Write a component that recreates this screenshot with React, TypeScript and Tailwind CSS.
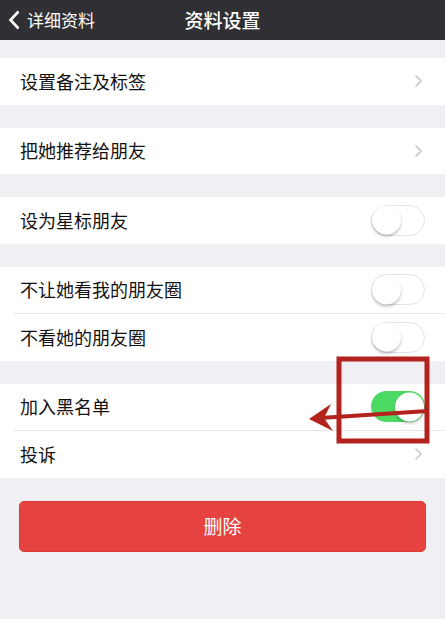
import React from "react";

const font = { fontFamily: '"Noto Sans CJK SC", "Noto Sans", sans-serif' };

function Chevron() {
  return (
    <svg width="9" height="14" viewBox="0 0 9 14" className="shrink-0">
      <path d="M1.5 1.5 L7 7 L1.5 12.5" fill="none" stroke="#c7c7cc" strokeWidth="1.6" />
    </svg>
  );
}

function Toggle({ on }: { on?: boolean }) {
  return (
    <div
      className={`relative h-[31px] w-[54px] shrink-0 rounded-full ${
        on ? "bg-[#4cd964]" : "border-[1.5px] border-[#e3e3e6] bg-white"
      }`}
    >
      <div
        className={`absolute top-1/2 h-[29px] w-[29px] -translate-y-1/2 rounded-full bg-white shadow-[0_2px_3px_rgba(0,0,0,0.25)] ${
          on ? "right-[1px]" : "left-0"
        }`}
      />
    </div>
  );
}

type Item = { label: string; kind: "arrow" | "off" | "on" };

function Group({ items }: { items: Item[] }) {
  return (
    <div className="bg-white">
      {items.map((item, i) => (
        <div key={item.label} className="relative">
          {i > 0 && <div className="ml-[14px] h-px bg-[#e5e5e8]" />}
          <div className="flex h-[46.5px] items-center justify-between pl-5 pr-[20px]">
            <span className="text-[18px] text-[#111]">{item.label}</span>
            {item.kind === "arrow" && (
              <div className="pr-[2px]">
                <Chevron />
              </div>
            )}
            {item.kind === "off" && <Toggle />}
            {item.kind === "on" && <Toggle on />}
          </div>
        </div>
      ))}
    </div>
  );
}

export default function App() {
  return (
    <div className="relative h-[619px] w-[445px] overflow-hidden bg-[#efeff4]" style={font}>
      {/* Nav bar */}
      <div className="relative flex h-10 items-center bg-[#303034] text-white">
        <div className="flex items-center pl-[8px]">
          <svg width="13" height="20" viewBox="0 0 13 20">
            <path d="M10.5 1.5 L2.5 10 L10.5 18.5" fill="none" stroke="white" strokeWidth="2.6" />
          </svg>
          <span className="ml-[6px] text-[17px]">详细资料</span>
        </div>
        <span className="absolute left-1/2 -translate-x-1/2 text-[19px] font-medium">资料设置</span>
      </div>

      <div className="flex flex-col gap-[23px] pt-[18px]">
        <Group items={[{ label: "设置备注及标签", kind: "arrow" }]} />
        <Group items={[{ label: "把她推荐给朋友", kind: "arrow" }]} />
        <Group items={[{ label: "设为星标朋友", kind: "off" }]} />
        <Group
          items={[
            { label: "不让她看我的朋友圈", kind: "off" },
            { label: "不看她的朋友圈", kind: "off" },
          ]}
        />
        <Group
          items={[
            { label: "加入黑名单", kind: "on" },
            { label: "投诉", kind: "arrow" },
          ]}
        />
        <div className="px-[19px]">
          <button className="flex h-[51px] w-full items-center justify-center rounded-[5px] border border-[#d73c39] bg-[#e64340] text-[19px] text-white">
            删除
          </button>
        </div>
      </div>

      {/* Red annotation */}
      <svg className="pointer-events-none absolute left-0 top-0" width="445" height="619" viewBox="0 0 445 619">
        <rect x="339" y="359" width="88" height="82" fill="none" stroke="#b3221d" strokeWidth="5" />
        <path d="M428 411 L320 418" stroke="#b3221d" strokeWidth="4" fill="none" />
        <path d="M309 419 L331 404 L324 418 L333 431 Z" fill="#b3221d" />
      </svg>
    </div>
  );
}
